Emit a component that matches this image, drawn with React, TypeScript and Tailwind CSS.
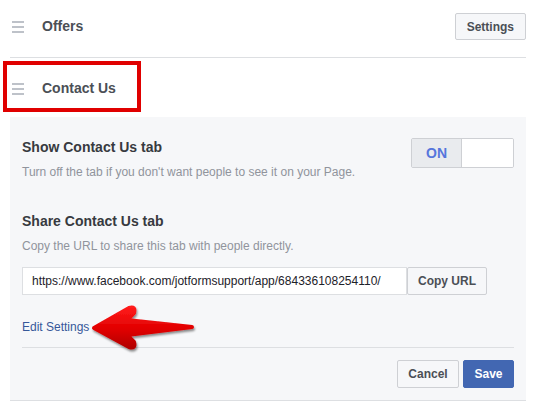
import React from "react";

function DragHandle() {
  return (
    <div className="flex w-[12px] flex-col gap-[3px]">
      <span className="block h-[2px] w-full bg-[#bec2c9]" />
      <span className="block h-[2px] w-full bg-[#bec2c9]" />
      <span className="block h-[2px] w-full bg-[#bec2c9]" />
    </div>
  );
}

function Arrow() {
  return (
    <svg width="110" height="52" viewBox="0 0 110 52" className="absolute left-[88px] top-[302px]">
      <defs>
        <linearGradient id="red" x1="0" y1="0" x2="0" y2="1">
          <stop offset="0" stopColor="#ff1a1a" />
          <stop offset="0.55" stopColor="#e00000" />
          <stop offset="1" stopColor="#b30000" />
        </linearGradient>
        <filter id="shadow" x="-10%" y="-10%" width="130%" height="140%">
          <feDropShadow dx="1" dy="2" stdDeviation="1.2" floodColor="#000" floodOpacity="0.45" />
        </filter>
      </defs>
      <path
        d="M6 26 L41 6 Q48 4 46 11 L39 18 L104 25 L39 33 L46 40 Q48 47 41 45 Z"
        fill="url(#red)"
        stroke="url(#red)"
        strokeWidth="4"
        strokeLinejoin="round"
        filter="url(#shadow)"
      />
    </svg>
  );
}

export default function App() {
  return (
    <div
      className="relative h-[412px] w-[541px] overflow-hidden bg-white text-[12px] text-[#1d2129]"
      style={{ fontFamily: '"Liberation Sans", Arial, sans-serif' }}
    >
      {/* Offers row */}
      <div className="ml-[10px] mr-[15px] border-b border-[#dddfe2] pt-[13px] pb-[17px]">
        <div className="flex h-[27px] items-center">
          <div className="ml-[2px]">
            <DragHandle />
          </div>
          <span className="ml-[18px] text-[14px] font-bold text-[#4b4f56]">Offers</span>
          <button className="ml-auto h-[27px] rounded-[2px] border border-[#ced0d4] bg-[#f6f7f9] px-[11px] text-[12px] font-bold text-[#4b4f56]">
            Settings
          </button>
        </div>
      </div>

      {/* Contact Us row */}
      <div className="ml-[10px] mr-[15px] flex h-[59px] items-center pt-[2px]">
        <div className="ml-[2px]">
          <DragHandle />
        </div>
        <span className="ml-[18px] text-[14px] font-bold text-[#4b4f56]">Contact Us</span>
      </div>

      {/* Annotation box */}
      <div className="absolute left-[3px] top-[61px] h-[51px] w-[138px] border-[4px] border-[#e00000]" />

      {/* Settings panel */}
      <div className="ml-[10px] mr-[15px] border-b border-[#dddfe2] bg-[#f6f7f9] px-[12px] pt-[21px] pb-[12px]">
        <div className="flex items-start justify-between">
          <div>
            <div className="text-[14px] leading-[18px] font-bold text-[#373a40]">Show Contact Us tab</div>
            <div className="mt-[8px] leading-[16px] text-[#90949c]">
              Turn off the tab if you don't want people to see it on your Page.
            </div>
          </div>
          <div className="flex h-[30px] w-[103px] overflow-hidden rounded-[2px] border border-[#ced0d4]">
            <div className="flex w-[50px] items-center justify-center border-r border-[#ced0d4] bg-[#e9ebee] text-[14px] font-bold text-[#5676dc]">
              ON
            </div>
            <div className="flex-1 bg-white" />
          </div>
        </div>

        <div className="mt-[32px] text-[14px] leading-[18px] font-bold text-[#373a40]">Share Contact Us tab</div>
        <div className="mt-[8px] leading-[16px] text-[#90949c]">Copy the URL to share this tab with people directly.</div>

        <div className="mt-[13px] flex h-[28px]">
          <div className="flex w-[385px] items-center border border-[#dddfe2] bg-white pl-[9px] text-[12px] text-[#1d2129]">
            https://www.facebook.com/jotformsupport/app/684336108254110/
          </div>
          <button className="w-[80px] rounded-[2px] border border-[#ced0d4] bg-[#f6f7f9] text-[12px] font-bold text-[#4b4f56]">
            Copy URL
          </button>
        </div>

        <div className="mt-[24px] leading-[16px] text-[#365899]">Edit Settings</div>

        <div className="mt-[12px] border-t border-[#dddfe2] pt-[12px]">
          <div className="flex justify-end gap-[4px]">
            <button className="h-[28px] w-[62px] rounded-[2px] border border-[#ced0d4] bg-[#f6f7f9] text-[12px] font-bold text-[#4b4f56]">
              Cancel
            </button>
            <button className="h-[28px] w-[51px] rounded-[2px] border border-[#4267b2] bg-[#4267b2] text-[12px] font-bold text-white">
              Save
            </button>
          </div>
        </div>
      </div>

      <Arrow />
    </div>
  );
}
